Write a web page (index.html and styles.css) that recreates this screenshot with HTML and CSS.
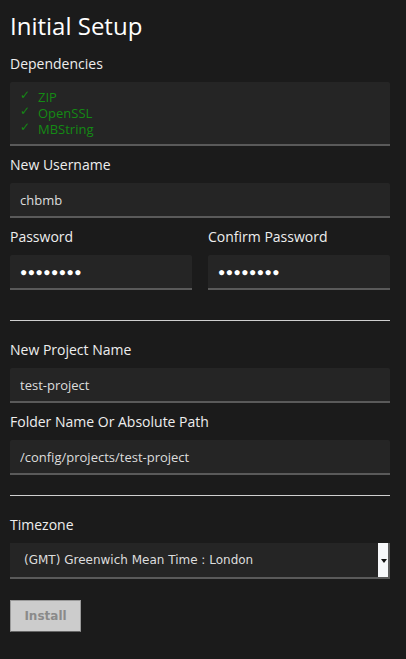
FILE: index.html
```html
<!DOCTYPE html>
<html lang="en">
<head>
    <meta charset="UTF-8">
    <meta name="viewport" content="width=device-width, initial-scale=1.0">
    <title>Initial Setup</title>
    <link rel="stylesheet" href="styles.css">
</head>
<body>
    <div class="container">
        <h1>Initial Setup</h1>

        <form class="setup-form">
            <div class="form-group">
                <label>Dependencies</label>
                <ul class="deps">
                    <li><span class="check">&#10003;</span>ZIP</li>
                    <li><span class="check">&#10003;</span>OpenSSL</li>
                    <li><span class="check">&#10003;</span>MBString</li>
                </ul>
            </div>

            <div class="form-group">
                <label for="username">New Username</label>
                <input type="text" id="username" value="chbmb">
            </div>

            <div class="form-row">
                <div class="form-group">
                    <label for="password">Password</label>
                    <input type="text" id="password" class="secret" value="&#9679;&#9679;&#9679;&#9679;&#9679;&#9679;&#9679;&#9679;" readonly>
                </div>
                <div class="form-group">
                    <label for="password2">Confirm Password</label>
                    <input type="text" id="password2" class="secret" value="&#9679;&#9679;&#9679;&#9679;&#9679;&#9679;&#9679;&#9679;" readonly>
                </div>
            </div>

            <hr>

            <div class="form-group">
                <label for="project">New Project Name</label>
                <input type="text" id="project" value="test-project">
            </div>

            <div class="form-group">
                <label for="path">Folder Name Or Absolute Path</label>
                <input type="text" id="path" value="/config/projects/test-project">
            </div>

            <hr>

            <div class="form-group">
                <label>Timezone</label>
                <div class="select">
                    <span class="select-value">(GMT) Greenwich Mean Time : London</span>
                    <span class="select-arrow"></span>
                </div>
            </div>

            <button type="button" class="install" disabled>Install</button>
        </form>
    </div>
</body>
</html>
```

FILE: styles.css
```css
* {
    box-sizing: border-box;
    margin: 0;
    padding: 0;
}

body {
    background-color: #1b1b1b;
    color: #eeeeee;
    font-family: 'Open Sans', sans-serif;
}

.container {
    padding: 8px 16px 20px 10px;
}

h1 {
    font-size: 24px;
    font-weight: 400;
    line-height: 36px;
    margin-bottom: 10px;
    color: #ffffff;
}

.form-group {
    display: flex;
    flex-direction: column;
    margin-bottom: 9px;
}

label {
    font-size: 14px;
    line-height: 20px;
    margin-bottom: 8px;
    color: #eeeeee;
}

input {
    height: 35px;
    padding: 0 10px;
    background: #252525;
    border: none;
    border-bottom: 2px solid #5a5a5a;
    border-radius: 2px 2px 0 0;
    color: #dddddd;
    font-family: 'Open Sans', sans-serif;
    font-size: 13px;
    outline: none;
    width: 100%;
}

input.secret {
    font-family: 'Liberation Sans', sans-serif;
    font-size: 12px;
    letter-spacing: 0.5px;
    color: #ffffff;
}

.deps {
    list-style: none;
    background: #252525;
    border-bottom: 2px solid #5a5a5a;
    border-radius: 2px 2px 0 0;
    padding: 7px 10px;
}

.deps li {
    font-size: 13px;
    line-height: 16px;
    height: 16px;
    color: #148a14;
}

.check {
    display: inline-block;
    width: 18px;
    font-size: 12px;
    line-height: 13px;
    font-weight: bold;
    font-family: 'DejaVu Sans', sans-serif;
    vertical-align: top;
}

.form-row {
    display: grid;
    grid-template-columns: 1fr 1fr;
    gap: 16px;
    margin-bottom: 21px;
}

hr {
    border: none;
    border-top: 1px solid #cfcfcf;
    margin: 20px 0 19px;
}

.select {
    display: flex;
    height: 36px;
    background: #252525;
    border-bottom: 2px solid #5a5a5a;
    border-right: 2px solid #5a5a5a;
}

.select-value {
    flex: 1;
    padding-left: 14px;
    line-height: 35px;
    font-family: 'DejaVu Sans', sans-serif;
    font-size: 12px;
    color: #dddddd;
}

.select-arrow {
    width: 10px;
    background: #f7f8fa;
    position: relative;
}

.select-arrow::after {
    content: '';
    position: absolute;
    left: 3px;
    top: 16px;
    border-left: 3px solid transparent;
    border-right: 3px solid transparent;
    border-top: 4px solid #111;
}

.install {
    margin-top: 12px;
    width: 71px;
    height: 32px;
    background: #cccccc;
    border: 1px solid #9a9a9a;
    border-bottom-color: #666;
    color: #8a8a8a;
    font-family: 'DejaVu Sans', sans-serif;
    font-size: 12px;
    font-weight: bold;
}
```
